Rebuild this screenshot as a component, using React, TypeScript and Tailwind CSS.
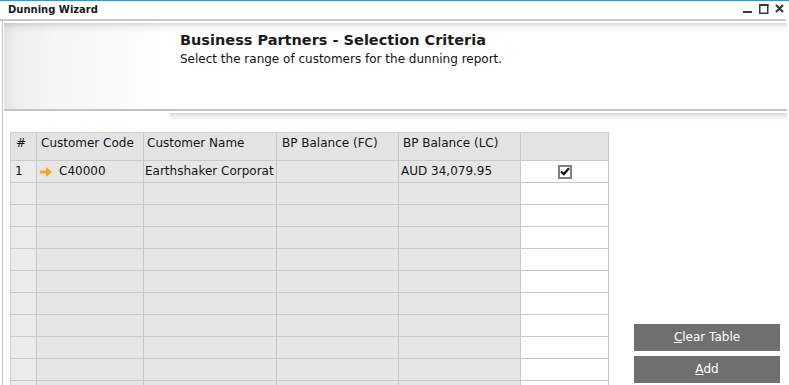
import React from "react";

const columns = [
  { key: "num", label: "#", pad: "pl-[5px]" },
  { key: "code", label: "Customer Code", pad: "pl-[4px]" },
  { key: "name", label: "Customer Name", pad: "pl-[3px]" },
  { key: "fc", label: "BP Balance (FC)", pad: "pl-[5px]" },
  { key: "lc", label: "BP Balance (LC)", pad: "pl-[4px]" },
  { key: "sel", label: "", pad: "" },
];

const emptyRows = Array.from({ length: 10 }, (_, i) => i);

const Arrow: React.FC = () => (
  <svg width="12" height="10" viewBox="0 0 12 10" className="mr-[7px] shrink-0">
    <rect x="0" y="3.5" width="7" height="3" fill="#f6a71c" />
    <polygon points="6,0 12,5 6,10" fill="#f6a71c" />
  </svg>
);

const CheckBox: React.FC = () => (
  <div className="w-[14px] h-[14px] border-2 border-[#808080] bg-white flex items-center justify-center">
    <svg width="10" height="9" viewBox="0 0 10 9">
      <path d="M1 4.5 L3.8 7.2 L9 1.2" stroke="#111" strokeWidth="2.2" fill="none" />
    </svg>
  </div>
);

const WindowControls: React.FC = () => (
  <svg width="42" height="18" viewBox="0 0 42 18">
    <rect x="0" y="10" width="9" height="2" fill="#3a3a3a" />
    <rect x="16.75" y="3.75" width="8" height="8.5" fill="none" stroke="#3a3a3a" strokeWidth="1.5" />
    <rect x="16" y="3" width="9.5" height="2" fill="#3a3a3a" />
    <path d="M33 4 L40 11 M40 4 L33 11" stroke="#3a3a3a" strokeWidth="2.2" />
  </svg>
);

const App: React.FC = () => {
  return (
    <div className="w-[789px] h-[385px] overflow-hidden bg-white flex flex-col font-['DejaVu_Sans',sans-serif] text-[12px] leading-[15px] text-[#151515]">
      <div className="h-px bg-[#3b93d3]" />
      <div className="h-[18px] flex items-center justify-between pl-[8px] pr-[4px]">
        <span className="font-bold text-[10px] leading-[18px] text-[#1a1a1a]">Dunning Wizard</span>
        <WindowControls />
      </div>
      <div className="h-[2px] bg-[#c8c8c8] mr-[3px]" />

      <div className="flex-1 min-h-0 flex flex-col ml-[2px] border-l border-[#c6c6c6]">
        <div className="h-[2px]" />
        {/* header panel */}
        <div className="h-[88px] ml-[1px] mr-[2px] border-b-2 border-[#c4c4c4] pl-[176px] pt-[8px] bg-[image:linear-gradient(to_bottom,rgba(0,0,0,0.13),rgba(0,0,0,0.03)_5px,rgba(0,0,0,0)_11px),linear-gradient(to_right,#e2e2e2,#efefef_12px,#f6f6f6_50px,#f9f9f9_100px,#fdfdfd_140px,#ffffff_170px)]">
          <div className="text-[14.5px] leading-[18px] font-bold text-[#1c1c1c]">
            Business Partners - Selection Criteria
          </div>
          <div className="mt-[3px] text-[#111]">Select the range of customers for the dunning report.</div>
        </div>
        <div className="h-[2px]" />
        <div className="h-[9px] ml-[167px] mr-[2px] bg-[image:linear-gradient(to_bottom,#d6d6d6,#ececec_3px,#ffffff_9px)]" />

        {/* table and buttons */}
        <div className="flex-1 min-h-0 flex mt-[10px] overflow-hidden">
          <div className="ml-[7px] grid grid-cols-[26px_107px_133px_122px_122px_88px] grid-rows-[28px_repeat(11,22px)] border-l border-t border-[#d0d0d0] self-start">
            {columns.map((c) => (
              <div
                key={c.key}
                className={`border-r border-b border-[#c9c9c9] bg-[#e3e3e3] pt-[3px] whitespace-nowrap overflow-hidden ${c.pad}`}
              >
                {c.label}
              </div>
            ))}

            <div className="border-r border-b border-[#c9c9c9] bg-[#ebebeb] flex items-center pl-[4px]">1</div>
            <div className="border-r border-b border-[#c9c9c9] bg-[#e6e6e6] flex items-center pl-[3px]">
              <Arrow />
              C40000
            </div>
            <div className="border-r border-b border-[#c9c9c9] bg-[#e6e6e6] flex items-center pl-[1px] whitespace-nowrap overflow-hidden">
              Earthshaker Corporat
            </div>
            <div className="border-r border-b border-[#c9c9c9] bg-[#e6e6e6]" />
            <div className="border-r border-b border-[#c9c9c9] bg-[#e6e6e6] flex items-center pl-[2px] whitespace-nowrap">
              AUD 34,079.95
            </div>
            <div className="border-r border-b border-[#c9c9c9] bg-white flex items-center justify-center">
              <CheckBox />
            </div>

            {emptyRows.map((r) => (
              <React.Fragment key={r}>
                <div className="border-r border-b border-[#c9c9c9] bg-[#ebebeb]" />
                <div className="border-r border-b border-[#c9c9c9] bg-[#e6e6e6]" />
                <div className="border-r border-b border-[#c9c9c9] bg-[#e6e6e6]" />
                <div className="border-r border-b border-[#c9c9c9] bg-[#e6e6e6]" />
                <div className="border-r border-b border-[#c9c9c9] bg-[#e6e6e6]" />
                <div className="border-r border-b border-[#c9c9c9] bg-white" />
              </React.Fragment>
            ))}
          </div>

          <div className="ml-auto mr-[9px] flex flex-col justify-end gap-[5px] pb-[2px]">
            <button className="w-[146px] h-[27px] bg-[#6f6f6f] text-white flex items-center justify-center">
              <span className="underline">C</span>lear Table
            </button>
            <button className="w-[146px] h-[27px] bg-[#6f6f6f] text-white flex items-center justify-center">
              <span className="underline">A</span>dd
            </button>
          </div>
        </div>
      </div>
    </div>
  );
};

export default App;
